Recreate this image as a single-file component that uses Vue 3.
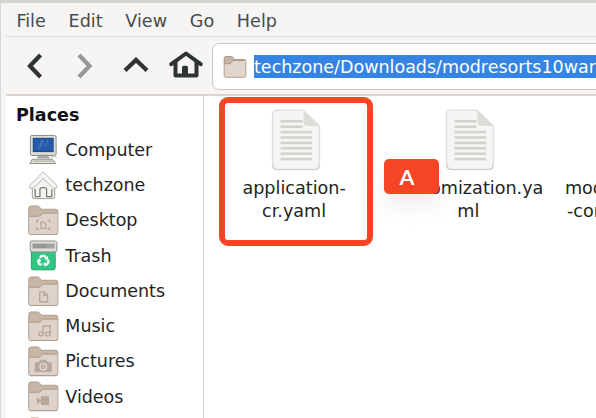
<script setup>
const menus = ['File', 'Edit', 'View', 'Go', 'Help']
const places = [
  { name: 'Computer', icon: 'computer' },
  { name: 'techzone', icon: 'home' },
  { name: 'Desktop', icon: 'desktop' },
  { name: 'Trash', icon: 'trash' },
  { name: 'Documents', icon: 'documents' },
  { name: 'Music', icon: 'music' },
  { name: 'Pictures', icon: 'pictures' },
  { name: 'Videos', icon: 'videos' },
  { name: '', icon: 'downloads' },
]
const files = [
  { lines: ['application-', 'cr.yaml'] },
  { lines: ['customization.ya', 'ml'] },
  { lines: ['modresorts10war', '-config.yaml'] },
]
const textRows = [13.2, 18.6, 24, 29.4, 34.8, 40.2, 45.6, 51]
</script>

<template>
  <div class="window">
    <nav class="menubar">
      <span v-for="m in menus" :key="m">{{ m }}</span>
    </nav>
    <header class="toolbar">
      <svg class="nav back" width="32" height="32" viewBox="0 0 32 32"><path d="M22.5 5 L12 16 L22.5 27" /></svg>
      <svg class="nav forward" width="32" height="32" viewBox="0 0 32 32"><path d="M9 5 L19.5 16 L9 27" /></svg>
      <svg class="nav up" width="32" height="32" viewBox="0 0 32 32"><path d="M5 20.5 L16 10 L27 20.5" /></svg>
      <svg class="house" width="34" height="32" viewBox="0 0 34 32">
        <path class="roof" d="M2.3 14.2 L17 3.5 L31.7 14.2" />
        <path class="walls" d="M6.5 12 V25.5 H27.5 V12" />
        <path class="door" d="M13 26 V17.3 Q13 15.7 14.6 15.7 H17.4 Q19 15.7 19 17.3 V26 Z" />
      </svg>
      <div class="location">
        <svg class="folder" width="24" height="24" viewBox="0 0 24 24">
          <path d="M1.2 20.5 V3.2 Q1.2 1.5 2.9 1.5 H8.5 Q9.7 1.5 10.2 2.6 L11 4.5 H21 Q22.8 4.5 22.8 6.2 V20.5 Q22.8 22.2 21 22.2 H2.9 Q1.2 22.2 1.2 20.5 Z" fill="#c8b5a5" stroke="#ad9989" />
          <path d="M1.7 9.2 H7 L10.8 5.5 H22.3 V21.7 H1.7 Z" fill="#dfd5cc" />
          <path d="M1.7 8.6 H7 L10.3 5.4 H22.3" fill="none" stroke="#ad9989" />
        </svg>
        <span class="path">techzone/Downloads/modresorts10war</span>
      </div>
    </header>
    <main class="content">
      <aside class="sidebar">
        <h2>Places</h2>
        <ul>
          <li v-for="p in places" :key="p.icon">
            <svg class="icon" width="32" height="32" viewBox="0 0 32 32">
              <g v-if="p.icon === 'computer'">
                <rect x="2.5" y="1.5" width="27" height="21" rx="1.7" fill="#deded9" stroke="#858780" />
                <rect x="5" y="4" width="22" height="15" fill="#204a87" />
                <rect x="6" y="5" width="20" height="13" fill="#2459ad" />
                <path d="M10 16 L14 6 H17 L13 16 Z M17 13 L20 6 H22 L19 13 Z" fill="#527eb9" opacity=".65" />
                <path d="M12 22.5 H20 L22 25 H10 Z" fill="#b7b8b2" stroke="#777a74" stroke-width=".8" />
                <path d="M23 24.5 Q30 23 30 25" fill="none" stroke="#b4b5af" />
                <path d="M4.5 26.5 H25.5 L29 31 H2 Z" fill="#e6e6e1" stroke="#878a83" />
                <path d="M5 28.5 H26" stroke="#b5b8b0" stroke-width="1.5" />
              </g>
              <g v-else-if="p.icon === 'home'">
                <path d="M4.5 15 V28 Q4.5 30 6.5 30 H26 Q28 30 28 28 V15 L16 7 Z" fill="#f3f3f1" stroke="#969892" />
                <path d="M2 19 Q1 17 3 15 L16 2 L29 15 Q31 17 29.5 19 H26.5 L16 9 L5.5 19 Z" fill="#f5f5f3" stroke="#b0b2ac" />
                <path d="M7.5 20 V28 H12.5 V20.5 Q12.5 18.5 15 18.5 H17 Q19.5 18.5 19.5 20.5 V28 H25 V20" fill="none" stroke="#777a74" stroke-width="1.3" />
              </g>
              <g v-else-if="p.icon === 'trash'">
                <path d="M3.5 10 H28.5 V29.2 Q28.5 31.3 26.4 31.3 H5.6 Q3.5 31.3 3.5 29.2 Z" fill="#32c682" stroke="#249e66" />
                <rect x="2.3" y="1" width="28" height="11.5" rx="2" fill="#deddda" stroke="#8c8d89" />
                <rect x="4.8" y="3.8" width="23" height="5" fill="#969792" />
                <path d="M19 4.3 H27.3 V8.3 H19 Z" fill="#acaeaa" opacity=".6" />
                <g fill="none" stroke="#f5fff9" stroke-width="2.4">
                  <path d="M12.5 18.5 L14.2 16.6 H17.2 L19 19" />
                  <path d="M20.5 20 L21.7 23 L20 25.5 H17.2" />
                  <path d="M14.5 25.5 H12 L10.8 23 L12 20.5" />
                </g>
                <path d="M17 20.5 H21 V16.5 Z M18.5 22.7 V28 L15.5 25.3 Z M9 21.7 L12.3 19 L14 22.8 Z" fill="#f5fff9" />
              </g>
              <g v-else>
                <path d="M.8 28.5 V3.5 Q.8 1 3.3 1 H10 Q11.6 1 12.5 2.6 L13.6 4.5 H29 Q31.3 4.5 31.3 6.8 V28.8 Q31.3 31.2 29 31.2 H3 Q.8 31.2 .8 28.5 Z" fill="#c8b6a6" stroke="#ad9a8a" />
                <path d="M1.4 12.3 H11 Q12.3 12.3 13.2 11.4 L15 9.6 Q15.7 8.9 17 8.9 H30.8 V28.5 Q30.8 30.7 28.7 30.7 H3.3 Q1.4 30.7 1.4 28.5 Z" fill="#ddd3ca" />
                <path d="M1.3 11.8 H11 Q12.2 11.8 13 11 L14.8 9.2 Q15.6 8.4 17 8.4 H30.8" fill="none" stroke="#ad9a8a" />
                <path d="M2 31 H30" stroke="#ad9a8a" />
                <g v-if="p.icon === 'desktop'" fill="none" stroke="#b9a799" stroke-width="1.4">
                  <path d="M9.2 18.5 V16.2 H11.5 M20.5 16.2 H22.8 V18.5 M9.2 23.3 V25.6 H11.5 M20.5 25.6 H22.8 V23.3" />
                  <path d="M13.5 18 H16.5 L18.7 20.3 V24.5 H13.5 Z" />
                </g>
                <path v-else-if="p.icon === 'documents'" d="M12.3 16.7 H17.3 L20.5 19.9 V27 H12.3 Z M16.8 17 V20.4 H20.5" fill="none" stroke="#b9a799" stroke-width="1.4" />
                <g v-else-if="p.icon === 'music'" fill="none" stroke="#b9a799" stroke-width="1.4">
                  <path d="M16 24 V15.7 H23.2 V24" />
                  <ellipse cx="13.6" cy="24" rx="2.3" ry="2.1" />
                  <ellipse cx="20.9" cy="24" rx="2.3" ry="2.1" />
                </g>
                <g v-else-if="p.icon === 'pictures'">
                  <path d="M8.5 17 H11.5 L13.2 14.5 H19 L20.7 17 H23.5 Q25 17 25 18.5 V26 Q25 27.4 23.5 27.4 H8.5 Q7 27.4 7 26 V18.5 Q7 17 8.5 17 Z" fill="#b9a799" />
                  <circle cx="16" cy="21.7" r="3.4" fill="#b9a799" stroke="#ddd3ca" stroke-width="1.6" />
                  <circle cx="16" cy="21.7" r="1" fill="#ddd3ca" />
                </g>
                <path v-else-if="p.icon === 'videos'" d="M13.5 16 H22 V25.2 H13.5 V21.5 L9.3 24 V17.6 L13.5 19.8 Z" fill="#b9a799" />
              </g>
            </svg>
            <span>{{ p.name }}</span>
          </li>
        </ul>
      </aside>
      <section class="files">
        <article v-for="(f, i) in files" :key="i" class="file">
          <svg v-if="i < 2" class="sheet" width="50" height="62" viewBox="0 0 50 62">
            <path d="M6 1.2 H32 L48.5 17 V55.5 Q48.5 60.5 43.5 60.5 H6 Q1.5 60.5 1.5 55.5 V5.8 Q1.5 1.2 6 1.2 Z" fill="#f5f5f3" stroke="#dededb" stroke-width="1.3" />
            <path d="M2 56 Q2 60.5 6 60.5 H44 Q48 60.5 48 56" fill="none" stroke="#cfcfcc" stroke-width="1.1" />
            <path d="M32.5 1.5 L48.3 17 H37 Q32.5 17 32.5 12.5 Z" fill="#dcdcd9" />
            <path v-for="(y, n) in textRows" :key="y" :d="`M9.5 ${y - .9} H${n < 2 ? 31.5 : 41}`" stroke="#d2d2cf" stroke-width="2.6" />
          </svg>
          <div v-else class="sheet"></div>
          <span v-for="line in f.lines" :key="line" class="line">{{ line }}</span>
        </article>
        <div class="highlight"></div>
        <div class="callout">A</div>
      </section>
    </main>
  </div>
</template>

<style>
body { background: #f6f5f4; overflow: hidden; }
</style>

<style scoped>
* { box-sizing: border-box; }
.window {
  width: 596px;
  height: 418px;
  overflow: hidden;
  display: flex;
  flex-direction: column;
  background: #f6f5f4;
  border-top: 3px solid #d6d4d1;
  border-left: 1px solid #d9d7d5;
  padding-left: 5px;
  font: 17.6px/24px "DejaVu Sans", sans-serif;
  color: #242424;
}
.menubar {
  flex: none;
  height: 34px;
  display: flex;
  gap: 22.7px;
  padding: 6px 0 0 10.4px;
  border-bottom: 1px solid #dddbd8;
  color: #464b4d;
}
.toolbar {
  flex: none;
  height: 59px;
  display: flex;
  align-items: center;
  padding-left: 12px;
  border-bottom: 2px solid #d8d5d2;
}
.nav { flex: none; fill: none; stroke: #2e3436; stroke-width: 4.2; }
.back { margin-right: 20px; }
.forward { margin-right: 18px; stroke: #959899; }
.up { margin-right: 17px; }
.house { flex: none; }
.roof, .walls { fill: none; stroke: #2e3436; stroke-width: 4; stroke-linejoin: round; stroke-linecap: round; }
.walls { stroke-linecap: butt; }
.door { fill: #2e3436; }
.location {
  flex: none;
  margin-left: 9px;
  margin-top: 2px;
  width: 420px;
  height: 47px;
  display: flex;
  align-items: center;
  padding-left: 10px;
  background: #fff;
  border: 1px solid #cdc7c2;
  border-radius: 7px;
}
.folder { flex: none; margin-right: 7px; }
.path { background: #3584e4; color: #fff; height: 23px; line-height: 24px; white-space: nowrap; font-size: 17.5px; }
.content { flex: 1; min-height: 0; display: flex; background: #fff; }
.sidebar { flex: none; width: 198px; overflow: hidden; border-right: 1px solid #d5d0cc; }
h2 { margin: 6.5px 0 0 10px; font-size: 17.5px; line-height: 24px; color: #111; }
ul { margin: 5.5px 0 0; padding: 0; list-style: none; }
li { height: 35.3px; display: flex; align-items: center; gap: 6.5px; padding-left: 22.3px; font-size: 17.5px; }
.icon { flex: none; width: 30.5px; height: 30.5px; }
.files { position: relative; flex: 1; display: flex; padding: 12.5px 0 0 3px; overflow: hidden; }
.file { flex: none; width: 174.2px; display: flex; flex-direction: column; align-items: center; }
.sheet { width: 50px; height: 62px; margin: 0 0 6px 3px; }
.line { height: 23.2px; line-height: 23.2px; }
.file:nth-child(3) { align-items: flex-start; padding-left: 9.5px; }
.file:nth-child(3) .line:last-child { padding-left: 2px; }
.highlight {
  position: absolute;
  left: 15px;
  top: .5px;
  width: 154px;
  height: 149px;
  border: 6.5px solid #f64525;
  border-radius: 9px;
}
.callout {
  position: absolute;
  left: 180px;
  top: 63px;
  width: 55px;
  height: 35px;
  padding-right: 9px;
  border-radius: 5px;
  background: #f64525;
  box-shadow: 0 12px 26px rgba(0, 0, 0, .07);
  color: #fff;
  font: 700 21.5px/36px Lato, sans-serif;
  text-align: center;
}
</style>
